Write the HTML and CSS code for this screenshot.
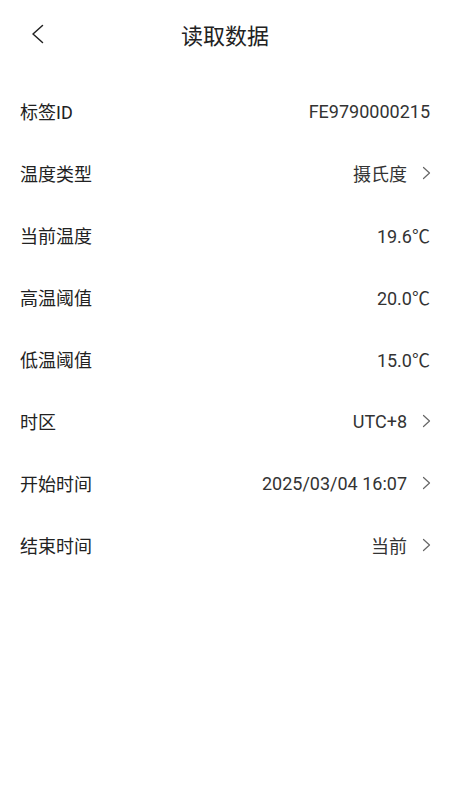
FILE: index.html
```
<!DOCTYPE html>
<html lang="zh-CN">
<head>
    <meta charset="UTF-8">
    <meta name="viewport" content="width=device-width, initial-scale=1.0">
    <title>读取数据</title>
    <link rel="stylesheet" href="styles.css">
</head>
<body>
    <header class="top-bar">
        <span class="back">
            <svg width="13" height="20" viewBox="0 0 13 20"><path d="M11.5 1.5 L2 10 L11.5 18.5" fill="none" stroke="#222" stroke-width="1.5" stroke-linecap="round" stroke-linejoin="round"/></svg>
        </span>
        <h1>读取数据</h1>
    </header>

    <div class="list">
        <div class="row">
            <span class="label">标签ID</span>
            <span class="value">FE9790000215</span>
        </div>
        <div class="row">
            <span class="label">温度类型</span>
            <span class="value">摄氏度</span>
            <span class="arrow"><svg width="9" height="14" viewBox="0 0 9 14"><path d="M1.5 1.5 L7.5 7 L1.5 12.5" fill="none" stroke="#666" stroke-width="1.2" stroke-linecap="round" stroke-linejoin="round"/></svg></span>
        </div>
        <div class="row">
            <span class="label">当前温度</span>
            <span class="value">19.6℃</span>
        </div>
        <div class="row">
            <span class="label">高温阈值</span>
            <span class="value">20.0℃</span>
        </div>
        <div class="row">
            <span class="label">低温阈值</span>
            <span class="value">15.0℃</span>
        </div>
        <div class="row">
            <span class="label">时区</span>
            <span class="value">UTC+8</span>
            <span class="arrow"><svg width="9" height="14" viewBox="0 0 9 14"><path d="M1.5 1.5 L7.5 7 L1.5 12.5" fill="none" stroke="#666" stroke-width="1.2" stroke-linecap="round" stroke-linejoin="round"/></svg></span>
        </div>
        <div class="row">
            <span class="label">开始时间</span>
            <span class="value">2025/03/04 16:07</span>
            <span class="arrow"><svg width="9" height="14" viewBox="0 0 9 14"><path d="M1.5 1.5 L7.5 7 L1.5 12.5" fill="none" stroke="#666" stroke-width="1.2" stroke-linecap="round" stroke-linejoin="round"/></svg></span>
        </div>
        <div class="row">
            <span class="label">结束时间</span>
            <span class="value">当前</span>
            <span class="arrow"><svg width="9" height="14" viewBox="0 0 9 14"><path d="M1.5 1.5 L7.5 7 L1.5 12.5" fill="none" stroke="#666" stroke-width="1.2" stroke-linecap="round" stroke-linejoin="round"/></svg></span>
        </div>
    </div>
</body>
</html>
```

FILE: styles.css
```
body {
    font-family: Roboto, "Noto Sans CJK SC", sans-serif;
    margin: 0;
    padding: 0;
    background-color: #fff;
    color: #222;
}
.top-bar {
    height: 68px;
    display: flex;
    align-items: center;
    justify-content: center;
    position: relative;
}
.top-bar h1 {
    margin: 0;
    font-size: 22px;
    font-weight: normal;
    color: #222;
}
.back {
    position: absolute;
    left: 31px;
    top: 24px;
    display: flex;
}
.list {
    padding: 12px 20px 0 20px;
}
.row {
    height: 62px;
    display: flex;
    align-items: center;
    font-size: 18px;
}
.label {
    flex: 1;
}
.value {
    color: #333;
}
.arrow {
    display: flex;
    margin-left: 15px;
    margin-right: -1px;
}
```
